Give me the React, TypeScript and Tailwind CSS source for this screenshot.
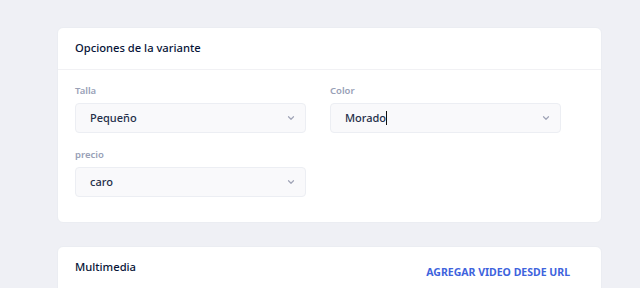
import React from "react";

const Chevron = () => (
  <svg width="10" height="10" viewBox="0 0 10 10" fill="none" className="shrink-0">
    <path d="M2.5 3.75 5 6.25 7.5 3.75" stroke="#a1a5b7" strokeWidth="1.2" strokeLinecap="round" strokeLinejoin="round" />
  </svg>
);

function SelectField({ label, value, caret }: { label: string; value: string; caret?: boolean }) {
  return (
    <div className="flex flex-col">
      <label className="text-[9.5px] font-semibold text-[#99a1b7] leading-[14px] mb-[5px]">{label}</label>
      <div className="h-[30px] flex items-center justify-between pl-[14px] pr-[9px] rounded-[4px] border border-[#eceef3] bg-[#f9f9fb]">
        <span className="text-[11px] font-medium text-[#252f4a] flex items-center">
          {value}
          {caret && <span className="inline-block w-px h-[14px] bg-[#111]" />}
        </span>
        <Chevron />
      </div>
    </div>
  );
}

export default function App() {
  return (
    <div className="h-[288px] overflow-hidden bg-[#eff0f5] pt-[27px] pl-[57px] pr-[38px] font-['Noto_Sans',sans-serif]">
      <div className="bg-white rounded-[6px] border border-[#ebedf2]">
        <div className="h-[42px] flex items-center px-[17px] border-b border-[#f1f1f4]">
          <h3 className="text-[11.2px] font-medium text-[#071437]">Opciones de la variante</h3>
        </div>
        <div className="px-[17px] pt-[14px] pb-[25px] grid grid-cols-2 gap-x-6 gap-y-[15px] w-[520px]">
          <SelectField label="Talla" value="Pequeño" />
          <SelectField label="Color" value="Morado" caret />
          <SelectField label="precio" value="caro" />
        </div>
      </div>
      <div className="mt-[23px] bg-white rounded-[6px] border border-[#ebedf2] h-[60px] flex items-start justify-between pl-[17px] pr-[31px]">
        <h3 className="text-[11.2px] font-medium text-[#071437] mt-[12px]">Multimedia</h3>
        <button className="mt-[18px] text-[10.5px] font-bold text-[#3e63dd] uppercase">Agregar video desde URL</button>
      </div>
    </div>
  );
}
